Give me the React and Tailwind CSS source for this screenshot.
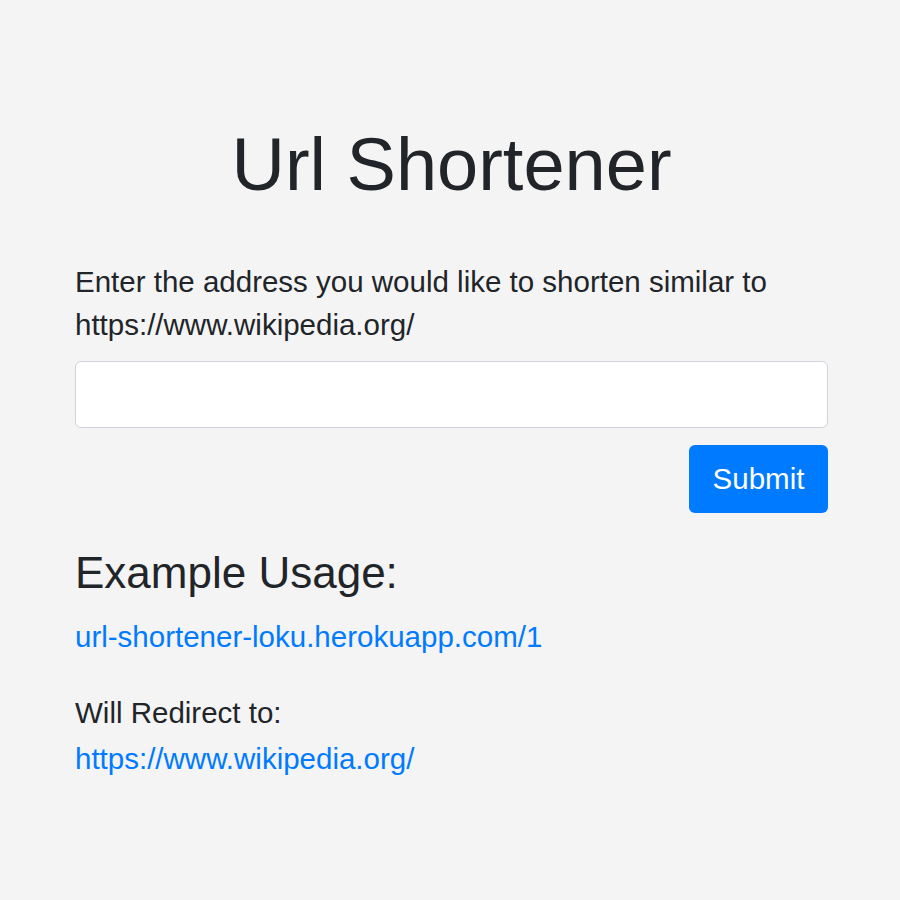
import React from 'react';

const App = () => {
  return (
    <div className="min-h-[900px] bg-[#f4f4f4] font-['Liberation_Sans',Arial,sans-serif] text-[#212529]">
      <div className="ml-[75px] w-[753px] pt-[119px]">
        <h1 className="text-center text-[74px] leading-[91px] font-normal">Url Shortener</h1>

        <p className="mt-[50px] text-[29.5px] leading-[43px]">
          Enter the address you would like to shorten similar to https://www.wikipedia.org/
        </p>

        <form className="mt-[15px] flex flex-col" onSubmit={(e) => e.preventDefault()}>
          <input
            type="text"
            className="h-[67px] w-full rounded-[6px] border border-[#ced4da] bg-white px-[22px] text-[28px] outline-none"
          />
          <div className="mt-[17px] flex justify-end">
            <button
              type="submit"
              className="h-[68px] w-[139px] rounded-[6px] bg-[#007bff] text-[29.5px] leading-[42px] text-white"
            >
              Submit
            </button>
          </div>
        </form>

        <h2 className="mt-[33px] text-[44px] leading-[54px] font-normal">Example Usage:</h2>
        <a href="#" className="mt-[16px] block text-[29.5px] leading-[42px] text-[#007bff]">
          url-shortener-loku.herokuapp.com/1
        </a>

        <p className="mt-[34px] text-[29.5px] leading-[42px]">Will Redirect to:</p>
        <a href="#" className="mt-[4px] block text-[29.5px] leading-[42px] text-[#007bff]">
          https://www.wikipedia.org/
        </a>
      </div>
    </div>
  );
};

export default App;
